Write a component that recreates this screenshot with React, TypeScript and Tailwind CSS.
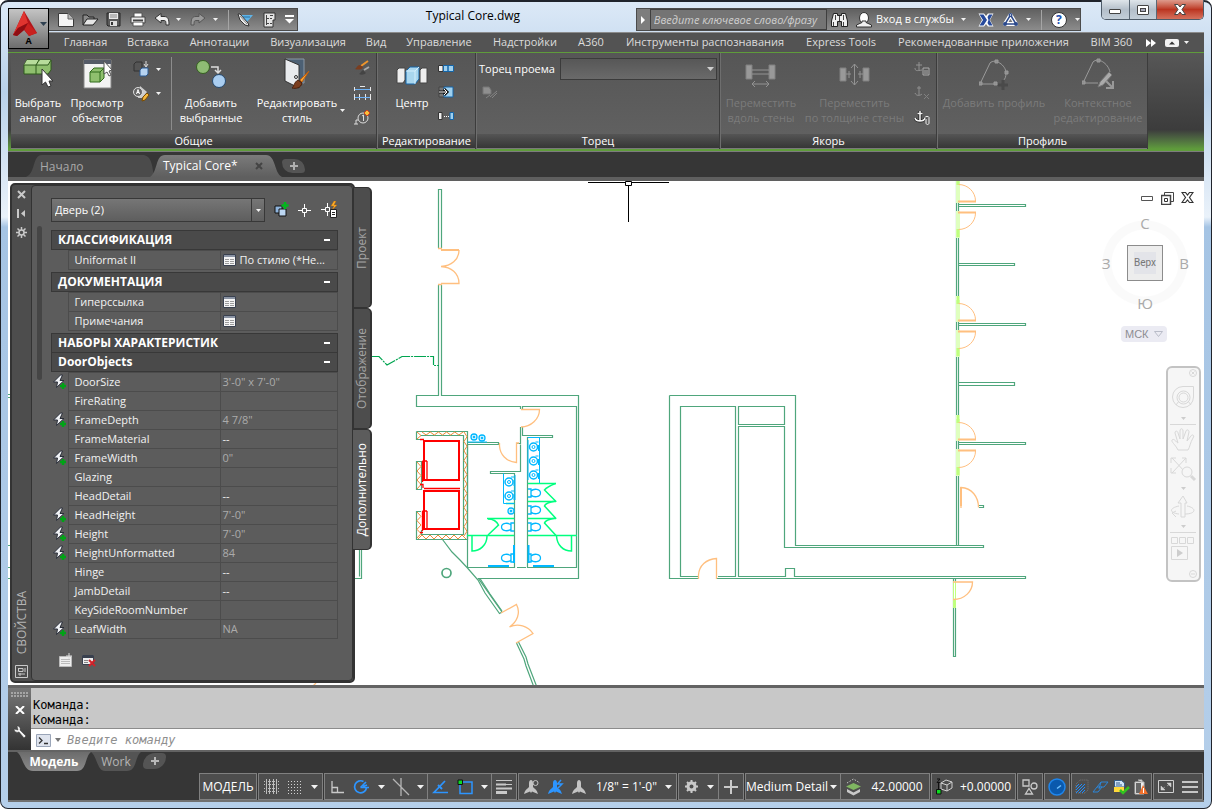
import React from 'react';

type Kids = { children?: React.ReactNode };

function Icon({ w, h, children, cls = '' }: { w: number; h: number; cls?: string } & Kids) {
  return (
    <svg width={w} height={h} viewBox={`0 0 ${w} ${h}`} fill="none" className={`shrink-0 ${cls}`} aria-hidden="true">
      {children}
    </svg>
  );
}

function Caret({ color = '#f2f2f2' }: { color?: string }) {
  return (
    <Icon w={7} h={4}>
      <path d="M0 0H7L3.5 4Z" fill={color} />
    </Icon>
  );
}

function SmallCaret() {
  return (
    <Icon w={5} h={3}>
      <path d="M0 0H5L2.5 3Z" fill="#f2f2f2" />
    </Icon>
  );
}

/* ---------------------------------------------------------------- title */

function QuickAccess() {
  return (
    <div className="flex h-[23px] w-[249px] items-center border border-l-0 border-[#4b4b4b] bg-linear-to-b from-[#606060] to-[#8c8c8c] pl-[9px]">
      <button aria-label="Создать" className="w-6">
        <Icon w={16} h={14}>
          <path d="M0.5 0.5H10L15.5 6V13.500H0.500Z" fill="#f4f4f4" stroke="#3a3a3a" />
          <path d="M10 0.500V6H15.500" fill="#bbb" stroke="#666" />
        </Icon>
      </button>
      <button aria-label="Открыть" className="w-6">
        <Icon w={17} h={14}>
          <path d="M1 12V2H5L7 4H12V6" fill="#8a8a8a" stroke="#222" />
          <path d="M1 12L5 6H16L11 12Z" fill="#e6e6e6" stroke="#222" />
        </Icon>
      </button>
      <button aria-label="Сохранить" className="w-6">
        <Icon w={15} h={15}>
          <path d="M1 1H14V14H2L1 13Z" fill="#5a5a5a" stroke="#262626" />
          <path d="M3 1H12V7H3Z" fill="#e8e8e8" />
          <path d="M4 3H11M4 5H11" stroke="#888" />
          <path d="M4 9H11V14H4Z" fill="#ddd" />
          <path d="M5 10H7V13H5Z" fill="#333" />
        </Icon>
      </button>
      <button aria-label="Печать" className="w-6">
        <Icon w={16} h={15}>
          <path d="M4 1H12V6H4Z" fill="#fff" stroke="#555" />
          <path d="M1 5H15V11H1Z" fill="#e8e8e8" stroke="#444" />
          <path d="M3 7.500H13V9H3Z" fill="#444" />
          <path d="M3 10H13V14H3Z" fill="#fff" stroke="#555" />
        </Icon>
      </button>
      <button aria-label="Отменить" className="w-[22px]">
        <Icon w={16} h={13}>
          <path d="M1 5L7 0.500V3.500H10C14 3.500 15 6 15 12H12C12 8 11.500 7.500 10 7.500H7V10Z" fill="#f0f0f0" stroke="#333" />
        </Icon>
      </button>
      <button aria-label="Список отмены" className="w-[14px]"><SmallCaret /></button>
      <button aria-label="Повторить" className="w-[23px]">
        <Icon w={16} h={13}>
          <path d="M15 5L9 0.500V3.500H6C2 3.500 1 6 1 12H4C4 8 4.500 7.500 6 7.500H9V10Z" fill="#9a9a9a" stroke="#565656" />
        </Icon>
      </button>
      <button aria-label="Список повтора" className="w-[15px]"><SmallCaret /></button>
      <span className="h-5 w-px bg-[#a5a5a5]" />
      <button aria-label="Рабочее пространство" className="ml-2 w-[26px]">
        <Icon w={17} h={14}>
          <path d="M4 2H16L10 9Z" fill="#5fb4e8" />
          <path d="M6 4H13" stroke="#2a6f9e" />
          <path d="M1 1L3 1L11 10L12 13L8 12L3 7Z" fill="#ececec" stroke="#333" />
          <path d="M3 3L10 11" stroke="#888" />
        </Icon>
      </button>
      <button aria-label="Диспетчер проектов" className="w-[22px]">
        <Icon w={14} h={16}>
          <path d="M1 1H12V8H10V15H1Z" fill="#e4e4e4" stroke="#333" />
          <path d="M3.500 3V13M3 6.500H6M3 11.500H6M7 6.500H9M7 11.500H9M7 3.500H10" stroke="#444" />
        </Icon>
      </button>
      <button aria-label="Настройка панели">
        <Icon w={9} h={9}>
          <path d="M0 1H9" stroke="#fff" strokeWidth="2" />
          <path d="M0 4H9L4.500 8.500Z" fill="#fff" />
        </Icon>
      </button>
    </div>
  );
}

function InfoCenter() {
  return (
    <div className="flex h-[23px] w-[445px] items-center border border-[#4b4b4b] bg-linear-to-b from-[#606060] to-[#8c8c8c] text-white">
      <button aria-label="Свернуть поиск" className="flex h-full w-[13px] items-center justify-center bg-[#7d7d7d]">
        <Icon w={4} h={8}><path d="M0 0L4 4L0 8Z" fill="#fff" /></Icon>
      </button>
      <input
        aria-label="Поиск"
        placeholder="Введите ключевое слово/фразу"
        className="h-[21px] w-[180px] border border-[#3f3f3f] bg-[#747474] pl-[3px] text-[11px] italic placeholder:text-[#cfcfcf]"
      />
      <button aria-label="Найти" className="ml-1 w-[25px]">
        <Icon w={17} h={16}>
          <path d="M2.500 1.500H6.500V3.500H10.500V1.500H14.500L16.500 9V14.500H10.500V9.500H6.500V14.500H0.500V9Z" fill="#f0f0f0" stroke="#222" />
          <path d="M2.500 10V14M12.500 10V14M4.500 3V8M12.500 3V8M8.500 4V9" stroke="#444" />
        </Icon>
      </button>
      <button className="flex items-center text-[11px]">
        <Icon w={16} h={16} cls="mr-1">
          <ellipse cx="8" cy="6" rx="4.500" ry="5.500" fill="#fff" stroke="#333" />
          <path d="M0.500 15V13L6 10.500V9H10V10.500L15.500 13V15Z" fill="#f2f2f2" stroke="#333" />
        </Icon>
        <span className="mr-1 w-[81px] text-left whitespace-nowrap">Вход в службы</span>
        <SmallCaret />
      </button>
      <button aria-label="Exchange" className="ml-3">
        <Icon w={16} h={14}>
          <path d="M0.500 0.500H6L8 3L10 0.500H15.500L12 7L15.500 13.500H10L8 11L6 13.500H0.500L4 7Z" fill="#fff" />
          <path d="M1.500 1.500H5.500L9 7L5.500 12.500H1.500L5 7ZM14.500 1.500H11L9.500 4L10.500 7L9.500 10L11 12.500H14.500L11.500 7Z" fill="#274a9c" />
        </Icon>
      </button>
      <button aria-label="A360" className="ml-2 flex items-center gap-[7px]">
        <Icon w={17} h={15}>
          <path d="M8.500 3L14 12H3Z" stroke="#fff" strokeWidth="4" strokeLinejoin="round" />
          <path d="M8.500 3L14 12H3Z" stroke="#2c4a8c" strokeWidth="1.500" />
          <circle cx="8.500" cy="3" r="2" fill="#2c4a8c" />
          <circle cx="3" cy="12" r="2" fill="#2c4a8c" />
          <circle cx="14" cy="12" r="2" fill="#2c4a8c" />
          <circle cx="8.500" cy="3" r="0.700" fill="#fff" />
        </Icon>
        <SmallCaret />
      </button>
      <span className="ml-[10px] h-5 w-px bg-[#a5a5a5]" />
      <button aria-label="Справка" className="ml-[9px] flex items-center gap-2">
        <span className="flex size-4 items-center justify-center rounded-full border border-[#333] bg-white text-[12px] leading-none font-bold text-[#1c4fb0]">?</span>
        <SmallCaret />
      </button>
    </div>
  );
}

function WindowButtons() {
  return (
    <div className="flex h-5 overflow-hidden rounded-b-[5px] border border-t-0 border-[#4e5b68]">
      <button aria-label="Свернуть окно" className="flex w-7 items-center justify-center border-r border-[#5b6875] bg-linear-to-b from-[#dfe5ea] via-[#b4bfca] to-[#c3ced8]">
        <span className="mt-1 h-[5px] w-3 rounded-[1px] border border-[#444] bg-white" />
      </button>
      <button aria-label="Развернуть окно" className="flex w-[27px] items-center justify-center border-r border-[#5b6875] bg-linear-to-b from-[#dfe5ea] via-[#b4bfca] to-[#c3ced8]">
        <span className="h-[10px] w-3 rounded-[1px] border border-[#444] bg-white p-[2px]"><span className="block h-1 border border-[#444] bg-[#aab]" /></span>
      </button>
      <button aria-label="Закрыть окно" className="flex w-[46px] items-center justify-center bg-linear-to-b from-[#dd9a8c] via-[#bb3420] to-[#d5705c]">
        <Icon w={12} h={11}>
          <path d="M0.500 0.500H4L6 3L8 0.500H11.500L8 5.500L11.500 10.500H8L6 8L4 10.500H0.500L4 5.500Z" fill="#fff" stroke="#444" />
        </Icon>
      </button>
    </div>
  );
}

const ribbonTabs = [
  'Главная', 'Вставка', 'Аннотации', 'Визуализация', 'Вид', 'Управление', 'Надстройки', 'A360',
  'Инструменты распознавания', 'Express Tools', 'Рекомендованные приложения', 'BIM 360',
];

function Header() {
  return (
    <header className="grid grid-cols-[41px_minmax(0,1fr)] grid-rows-[32px_20px]">
      <div className="col-start-2 row-start-1 flex items-start justify-between">
        <div className="mt-2"><QuickAccess /></div>
        <h1 className="mt-2 pl-3 text-[12px] leading-4 text-black">Typical Core.dwg</h1>
        <div className="flex items-start gap-5">
          <div className="mt-2"><InfoCenter /></div>
          <WindowButtons />
        </div>
      </div>
      <nav className="col-span-2 col-start-1 row-start-2 flex items-center border-t border-[#8b8b8b] bg-[#535353] pl-[46px] text-[11px] text-[#dcdcdc]">
        <div className="grid grid-cols-[63px_62px_81px_96px_40px_86px_86px_46px_182px_90px_195px_61px] whitespace-nowrap">
          {ribbonTabs.map((t) => (
            <button key={t} className="flex justify-center">{t}</button>
          ))}
        </div>
        <button aria-label="Ещё вкладки" className="ml-1">
          <Icon w={10} h={8}><path d="M0 0L5 4L0 8ZM5 0L10 4L5 8Z" fill="#fff" /></Icon>
        </button>
        <button aria-label="Свернуть ленту" className="ml-[9px] flex items-center gap-[5px]">
          <Icon w={14} h={8}>
            <rect width="14" height="8" rx="2" fill="#f2f2f2" />
            <path d="M4 5.500L7 2.500L10 5.500Z" fill="#333" />
          </Icon>
          <SmallCaret />
        </button>
      </nav>
      <button
        aria-label="Меню приложения"
        className="z-10 col-start-1 row-span-2 row-start-1 mt-2 flex h-[41px] flex-col items-center border border-black bg-linear-to-b from-[#c4c4c4] via-[#9a9a9a] to-[#6d6d6d]"
      >
        <span className="flex w-full items-center gap-[3px] pt-[2px] pl-1">
          <Icon w={24} h={25}>
            <path d="M11 0L24 22L16 25L11 19L4 25L0 24Z" fill="#b3161b" />
            <path d="M11 0L15 12L5 17L0 24Z" fill="#e0342f" />
            <path d="M15 12L24 22L16 25L9 15Z" fill="#c9211f" />
            <path d="M5 17L15 12L11 19L4 25L0 24Z" fill="#8f0e13" />
          </Icon>
          <Caret color="#2f4050" />
        </span>
        <span className="text-[9px] leading-[9px] font-bold text-black">A</span>
      </button>
    </header>
  );
}

/* --------------------------------------------------------------- ribbon */

function Panel({ title, cls, children }: { title: string; cls: string } & Kids) {
  return (
    <section className={`flex shrink-0 flex-col border-r border-[#3c3c3c] bg-linear-to-b from-[#565656] to-[#626262] ${cls}`}>
      <div className="flex flex-1 items-start">{children}</div>
      <h2 className="flex h-[15px] items-center justify-center border-b border-[#7a7a7a] bg-linear-to-b from-[#555] to-[#363636] text-[11px] leading-[14px] text-white">
        {title}
      </h2>
    </section>
  );
}

function BigButton({ lines, cls, icon, off = false }: { lines: string[]; cls: string; icon: React.ReactNode; off?: boolean }) {
  return (
    <button disabled={off} className={`flex shrink-0 flex-col items-center text-[11px] leading-[15px] whitespace-nowrap ${off ? 'text-[#7b7b7b]' : 'text-white'} ${cls}`}>
      <span className="flex h-[42px] items-center">{icon}</span>
      {lines.map((l) => <span key={l}>{l}</span>)}
    </button>
  );
}

const anchorPath = 'M6 2V12M3.500 4.500H8.500M1 9C2 13 10 13 11 9';

function Ribbon() {
  return (
    <div className="flex h-[99px] overflow-hidden border-t border-b-2 border-[#5f9c3b] bg-linear-to-b from-[#575757] via-[#3c3c3c] via-80% to-[#5f9c3b] pl-[3px]">
      <Panel title="Общие" cls="w-[366px]">
        <BigButton cls="w-[54px]" lines={['Выбрать', 'аналог']} icon={
          <Icon w={30} h={30}>
            <path d="M1 6L4 1H15L17 1H28V11L25 15H1Z" fill="#8fbf6e" stroke="#2f5a1d" />
            <path d="M1 6H13L16 1H4ZM14 6H25L28 1H17Z" fill="#b7dc9b" />
            <path d="M1 6H25L28 1M13 15V6L16 1" stroke="#2f5a1d" />
            <path d="M19 10V26L22.500 23L25 28L28 27L26 22H30Z" fill="#fff" stroke="#333" />
          </Icon>
        } />
        <BigButton cls="w-16" lines={['Просмотр', 'объектов']} icon={
          <Icon w={29} h={30}>
            <path d="M1 1H28V29H1Z" fill="#f3f3f3" stroke="#888" />
            <path d="M1 1H28V5H1Z" fill="#555b68" />
            <path d="M7 13L11 9H21V19L17 23H7Z" fill="#8fbf6e" stroke="#2f6b1a" />
            <path d="M7 13H17L21 9M17 13V23" stroke="#2f6b1a" />
            <path d="M21 2V15L24 13L26 17L28 16L26 12L29 11Z" fill="#fff" stroke="#555" />
          </Icon>
        } />
        <div className="flex w-[42px] flex-col gap-2 pt-[8px] pl-1">
          <button aria-label="Изолировать объекты" className="flex items-center gap-[6px]">
            <Icon w={17} h={16}>
              <path d="M1 3L3 1H9V7L7 10H1Z" fill="#555" stroke="#333" />
              <path d="M13 0V5M11 3L13 6L15 3" stroke="#ddd" />
              <path d="M7 9L9 7H15V13L13 15H7Z" fill="#b6d3f0" stroke="#2b5b94" />
            </Icon>
            <SmallCaret />
          </button>
          <button aria-label="Свойства текста" className="flex items-center gap-[6px]">
            <Icon w={17} h={17}>
              <path d="M7 1L14 7L9 13L5 13Z" fill="#cfcfcf" />
              <circle cx="5" cy="7" r="4.500" stroke="#ddd" fill="#666" />
              <path d="M3.500 9L5 4.500L6.500 9M4 7.500H6" stroke="#fff" />
              <path d="M9 16L10 12L14 8L16 10L12 15Z" fill="#f5b73c" stroke="#7a4c00" />
            </Icon>
            <SmallCaret />
          </button>
        </div>
        <span className="mt-1 h-[73px] w-px bg-[#8c8c8c]" />
        <BigButton cls="w-[78px]" lines={['Добавить', 'выбранные']} icon={
          <Icon w={32} h={30}>
            <circle cx="8" cy="8" r="6.500" fill="#8fbd74" stroke="#35601f" />
            <circle cx="24" cy="22" r="6.500" fill="#a9cdf0" stroke="#24486e" />
            <path d="M16 8H23V13M20 11L23 14L26 11" stroke="#ddd" strokeWidth="1.500" />
          </Icon>
        } />
        <div className="flex w-[98px] items-end">
          <BigButton cls="w-[94px]" lines={['Редактировать', 'стиль']} icon={
            <Icon w={30} h={32}>
              <path d="M4 1H22V25H20" fill="#4c6074" stroke="#8b98a5" />
              <path d="M3 1L17 7V30L3 23Z" fill="#e9ebee" stroke="#333" />
              <circle cx="14" cy="19" r="1.500" stroke="#333" />
              <path d="M27 13L18 22L20 24Z" fill="#f4a53a" stroke="#c4600a" />
              <path d="M10 30C12 29 12 24 16 22L20 25C19 30 14 31 10 30Z" fill="#7b3d1e" stroke="#4a1f0b" />
            </Icon>
          } />
          <span className="-ml-1 pb-[13px]"><SmallCaret /></span>
        </div>
        <div className="flex flex-1 flex-col items-center gap-[9px] pt-[7px]">
          <button aria-label="Копировать свойства">
            <Icon w={17} h={16}>
              <path d="M14 1L7 6" stroke="#f0952b" strokeWidth="2" />
              <path d="M1 9C3 8 3 5 6 5L9 7C8 10 4 10 1 9Z" fill="#7b3d1e" />
              <path d="M5 14C7 13 7 11 9 10L12 13C10 15 7 15 5 14Z" fill="#444" />
              <path d="M10 10L15 7" stroke="#aaa" strokeWidth="2" />
            </Icon>
          </button>
          <button aria-label="Размеры">
            <Icon w={17} h={16}>
              <path d="M0.500 2V6M16.500 2V6M0.500 9V15M5.500 9V15M11.500 9V15M16.500 9V15M6 1.500H11" stroke="#e8e8e8" />
              <path d="M1 4.500H16M1 12.500H16" stroke="#6db1f5" />
            </Icon>
          </button>
          <button aria-label="Выноска">
            <Icon w={17} h={16}>
              <circle cx="9" cy="8" r="5" stroke="#ddd" />
              <path d="M8 6L9.500 5V11M4 10H2V14M0 14H4" stroke="#ddd" />
              <path d="M10 3L13 0L16 3L13 6Z" fill="#f7c23c" stroke="#d63f1b" />
            </Icon>
          </button>
        </div>
      </Panel>

      <Panel title="Редактирование" cls="w-[99px] border-l border-l-[#6e6e6e]">
        <BigButton cls="ml-3 w-11" lines={['Центр']} icon={
          <Icon w={32} h={20} cls="mt-1">
            <path d="M1 4L3 2H9V14L7 17H1Z" fill="#eee" stroke="#444" />
            <path d="M10 5L14 1H23V13L19 18H10Z" fill="#a9d6ee" stroke="#1465a8" />
            <path d="M10 5H19L23 1M19 5V18" stroke="#d4eefc" />
            <path d="M24 4L26 2H31V17H24Z" fill="#eee" stroke="#444" />
          </Icon>
        } />
        <div className="flex w-6 flex-col items-center gap-[14px] pt-3">
          <button aria-label="Массив">
            <Icon w={16} h={7}>
              <path d="M0.500 0.500H5V6.500H0.500Z" fill="#eee" stroke="#333" />
              <path d="M5.500 0.500H10V6.500H5.500ZM10 0.500H15.500V6.500H10Z" fill="#9fd0ee" stroke="#1465a8" />
            </Icon>
          </button>
          <button aria-label="Переместить">
            <Icon w={16} h={12}>
              <path d="M1 1H8V11H1Z" fill="#777" stroke="#444" />
              <path d="M6 1H15V11H6Z" fill="#9fd0ee" stroke="#1465a8" />
              <path d="M1 6H9M6 3L9 6L6 9" stroke="#111" strokeWidth="3" />
              <path d="M1 6H9M6 3L9 6L6 9" stroke="#fff" />
            </Icon>
          </button>
          <button aria-label="Интервал">
            <Icon w={16} h={8}>
              <path d="M0.500 0.500H4V7.500H0.500Z" fill="#eee" stroke="#333" />
              <path d="M12 0.500H15.500V7.500H12Z" fill="#9fd0ee" stroke="#1465a8" />
              <path d="M6 4.500H11" stroke="#fff" strokeDasharray="1 1" />
            </Icon>
          </button>
        </div>
      </Panel>

      <Panel title="Торец" cls="w-[244px] border-l border-l-[#6e6e6e]">
        <div className="flex flex-col gap-[6px] pt-[5px] pl-[2px]">
          <div className="flex items-center">
            <label htmlFor="endcap" className="w-[81px] text-[11px] whitespace-nowrap text-white">Торец проема</label>
            <div className="relative">
              <select id="endcap" className="block h-[22px] w-[157px] appearance-none border border-[#3b3b3b] bg-linear-to-b from-[#575757] to-[#6a6a6a]" />
              <span className="pointer-events-none absolute top-[9px] right-[3px] flex"><Caret color="#cfcfcf" /></span>
            </div>
          </div>
          <button aria-label="Стиль торца" disabled className="ml-[3px] w-4">
            <Icon w={16} h={14}>
              <path d="M1 1H7L9 4V8H1Z" fill="#8f8f8f" stroke="#777" />
              <path d="M8 11L15 5M10 12L15 7M4 12L8 9" stroke="#858585" />
            </Icon>
          </button>
        </div>
      </Panel>

      <Panel title="Якорь" cls="w-[217px] border-l border-l-[#6e6e6e]">
        <BigButton off cls="w-20" lines={['Переместить', 'вдоль стены']} icon={
          <Icon w={32} h={26} cls="mt-1">
            <path d="M1 2H7V16H1ZM24 2H30V16H24Z" fill="#999" stroke="#808080" />
            <path d="M7 7H24M7 11H24" stroke="#939393" />
            <path d="M7 21H24M10 18L7 21L10 24M21 18L24 21L21 24" stroke="#939393" />
          </Icon>
        } />
        <BigButton off cls="w-[107px]" lines={['Переместить', 'по толщине стены']} icon={
          <Icon w={32} h={26} cls="mt-1">
            <path d="M1 5H7V18H1ZM24 5H30V18H24Z" fill="#999" stroke="#808080" />
            <path d="M7 11H12M19 11H24M10 8V15M21 8V15M15.500 1V22M12 5L15.500 1L19 5M12 18L15.500 22L19 18" stroke="#939393" />
          </Icon>
        } />
        <div className="flex flex-1 flex-col items-center gap-[9px] pt-2">
          <button aria-label="Якорь" disabled>
            <Icon w={16} h={15}>
              <path d="M5 1V9M2 4H8M1 7C1 10 3 10 8 9" stroke="#939393" />
              <path d="M9 7H15V14H9ZM10 10H14M10 12H14" stroke="#aaa" />
            </Icon>
          </button>
          <button aria-label="Освободить якорь" disabled>
            <Icon w={16} h={15}>
              <path d="M5 1V10M3 3H7M1 8C2 11 6 11 8 9" stroke="#909090" />
              <path d="M10 9L15 14M15 9L10 14" stroke="#808080" />
            </Icon>
          </button>
          <button aria-label="Свойства якоря">
            <Icon w={17} h={16}>
              <path d={anchorPath} stroke="#1e1e1e" strokeWidth="3" />
              <path d={anchorPath} stroke="#f4f4f4" strokeWidth="1.500" />
              <path d="M11 8.500C11 7 15 7 15 8.500V14C15 16 12 16 12 14V10" stroke="#eee" />
            </Icon>
          </button>
        </div>
      </Panel>

      <Panel title="Профиль" cls="w-[211px] border-l border-l-[#6e6e6e]">
        <BigButton off cls="w-[112px]" lines={['Добавить профиль']} icon={
          <Icon w={30} h={32}>
            <path d="M1 26L11 5C16 0 27 7 27 15C27 19 26 21 24 23M1 26H17" stroke="#9a9a9a" />
            <path d="M16 2H19V5H16ZM26 13H29V16H26ZM0 24H3V27H0ZM15 24H18V27H15Z" fill="#8f8f8f" stroke="#9a9a9a" />
            <path d="M24 22V32M19 27H29" stroke="#4a4a4a" strokeWidth="3" />
          </Icon>
        } />
        <BigButton off cls="w-24" lines={['Контекстное', 'редактирование']} icon={
          <Icon w={32} h={32}>
            <path d="M1 25L11 4C16 -1 26 5 28 14M1 25H16" stroke="#9a9a9a" />
            <path d="M15 1H18V4H15ZM0 23H3V26H0Z" fill="#8f8f8f" stroke="#9a9a9a" />
            <path d="M16 29L18 24L27 14L30 17L21 27Z" fill="#aaa" stroke="#777" />
            <path d="M24 23L30 29M31 23V30H24" stroke="#999" strokeWidth="2" />
          </Icon>
        } />
      </Panel>
    </div>
  );
}

/* ------------------------------------------------------------ file tabs */

function FileTabs() {
  return (
    <div className="flex h-[30px] items-end border-t border-b-[4px] border-t-[#7d7d7d] border-b-[#5f5f5f] bg-[#363636] pl-[18px] text-[12px]">
      <button className="h-[22px] w-[128px] bg-[#4b4b4b] pt-[2px] pl-[14px] text-left text-[#a9a9a9] [clip-path:path('M0_22C10_18_6_0_16_0H116C124_0_126_6_128_22Z')]">
        Начало
      </button>
      <div className="-ml-1 flex h-[22px] w-[132px] items-center justify-between bg-linear-to-b from-[#7b7b7b] to-[#5f5f5f] pr-[19px] pl-[13px] text-white [clip-path:path('M0_22C8_17_5_0_15_0H116C126_0_124_18_132_22Z')]">
        <button>Typical Core*</button>
        <button aria-label="Закрыть чертёж">
          <Icon w={8} h={8}><path d="M1 1L7 7M7 1L1 7" stroke="#444" strokeWidth="2" /></Icon>
        </button>
      </div>
      <button aria-label="Новый чертёж" className="mb-1 flex h-[14px] w-[23px] items-center justify-center rounded-tl-sm rounded-tr-xl rounded-br-sm rounded-bl-xl bg-[#555]">
        <Icon w={8} h={8}><path d="M4 0V8M0 4H8" stroke="#b0b0b0" strokeWidth="2" /></Icon>
      </button>
    </div>
  );
}

/* -------------------------------------------------------------- drawing */

const G = '#4fa67c';
const O = '#ffbf7f';
const B = '#00b8ff';
const N = '#00ff7f';
const L = '#bfff7f';

function DoorPair({ y }: { y: number }) {
  return (
    <g transform={`translate(0 ${y})`}>
      <path d="M957 -23V-1M959 -23V-1M957 7V34M959 7V34" stroke={L} />
      <path d="M958 -27V-19M958 25V33" stroke={L} strokeWidth="3" />
      <path d="M958.500 -19.500C968 -19.500 975.500 -12 975.500 -3" stroke={O} />
      <path d="M958 -2.500H976M958 8.500H976" stroke={O} strokeWidth="2" />
      <path d="M975.500 9C975.500 18 968 25.500 958.500 25.500" stroke={O} />
    </g>
  );
}

function Sink({ x, y }: { x: number; y: number }) {
  return (
    <g stroke={B}>
      <circle cx={x} cy={y} r="4" strokeWidth="1.500" />
      <circle cx={x} cy={y} r="1.500" />
      <path d={`M${x + 2} ${y - 5}H${x + 5}M${x + 5} ${y - 2}V${y + 4}`} />
    </g>
  );
}

function SmallSink({ x, y }: { x: number; y: number }) {
  return (
    <g stroke={B}>
      <circle cx={x} cy={y} r="3" strokeWidth="1.300" />
      <circle cx={x} cy={y} r="1" fill={B} />
    </g>
  );
}

function Toilet({ x, y, flip = false }: { x: number; y: number; flip?: boolean }) {
  return (
    <path
      transform={`translate(${x} ${y}) scale(${flip ? -1 : 1} 1)`}
      d="M0 -4H3V4H0M3 -2C6 -5 12.500 -4 12.500 0C12.500 4 6 5 3 2"
      stroke={B}
      strokeWidth="1.300"
    />
  );
}

const hatch = (x1: number, y1: number, x2: number, y2: number, n: number) => {
  const horizontal = x2 - x1 > y2 - y1;
  return Array.from({ length: n }, (_, i) => {
    const s = (horizontal ? x2 - x1 : y2 - y1) / n;
    const a = (horizontal ? x1 : y1) + i * s;
    return horizontal
      ? `M${a} ${y1}L${a + s / 2} ${y2}L${a + s} ${y1}`
      : `M${x1} ${a}L${x2} ${a + s / 2}L${x1} ${a + s}`;
  }).join('');
};

function FloorPlan() {
  return (
    <svg className="absolute inset-0 h-full w-full" viewBox="8 181 1196 504" preserveAspectRatio="xMinYMin slice" fill="none" aria-label="План этажа">
      <g stroke={G} strokeWidth="1.200">
        <path d="M438.500 248V189.500H441.500V248M438.500 285V395.500H416.500V406.500H520.500V409M441.500 285V395.500H578.500V578.500H478.500L502 612M522.500 409V406.500H576.500V567.500H527.500V437.500H552.500V435.500H522.500V427M520.500 427V443.500H516M517 567.500H526" />
        <path d="M467.500 442.500H498.500V444.500H467.500V567.500H514.500V473.500H490.500V471.500H520.500V444.500" />
        <path d="M416.500 431.500H467.500V539.500H416.500V511.500H421M421 439.500H416.500V431.500M421 435.500H463.500V534.500H421.500V530M416.500 461.500H421.500V489.500H416.500Z" />
        <path d="M442.500 539.500L452 552L460 560L467.500 568L478 580L485 593L499.500 613.500L502 612M480 578.500L490 594L502 611" />
        <path d="M516.500 643L524 659L526 666L533.500 686M518.500 642L526 657L528 664L536.500 686" />
        <path d="M669.500 395.500H795.500V545.500H983.500V547.500H784.500V426.500H738.500V576.500H785.500V568.500H794.500V576.500H1025.500V578.500H717M669.500 395.500V578.500H699M699 576.500H680.500V406.500H735.500V576.500H718M738.500 406.500H784.500V424.500H738.500Z" />
        <path d="M956.500 181V545.500M958.500 181V545.500M953.500 579V656.500H955.500V579" />
        <path d="M958.500 204.500H1025.500V206.500H958.500M958.500 263.500H1014.500V265.500H958.500M958.500 323.500H1025.500V325.500H958.500M958.500 382.500H1014.500V385.500H958.500M958.500 442.500H1025.500V444.500H958.500M979 505.500H983.500V507.500H979" />
        <path d="M359.500 548V576.500M361.500 548V578.500H354M8 394.500H11M8 397.500H11M8 545.500H11M8 567.500H11M8 578.500H11" />
      </g>
      <circle cx="446.500" cy="573" r="4.500" stroke={G} strokeWidth="1.700" />
      <path d="M372 356.500H379L387 365L402 356.500H433.500V365.500H439" stroke="#00a550" strokeDasharray="12 1 2 1" strokeWidth="1.200" />

      <path
        d="M956 296H961V322H956ZM956 330H961V357H956ZM956 415H961V441H956ZM956 449H961V476H956ZM956 181H961V203H956ZM956 211H961V238H956ZM953 581H957V608H953Z"
        fill="#fff"
      />
      <DoorPair y={204} />
      <DoorPair y={323} />
      <DoorPair y={442} />
      <path d="M953.500 581V608M955.500 581V608" stroke={L} />
      <path d="M954.500 600V608" stroke={L} strokeWidth="3" />

      <g stroke={O} strokeWidth="1.300">
        <path d="M438 248.500H442M438 284.500H442M441 266.500C451 266 459 260 459 250M441 266.500C451 267 459 273 459 283.500H441" />
        <path d="M441 250H459" strokeWidth="2" />
        <path d="M521 409.500H539.500C539.500 419 531 427 521 427" />
        <path d="M499.500 443V446C500 454 506 462 516.500 462.500V443H519" />
        <path d="M501 613L516.500 604.500C521 613 517 622 509.500 627C518 623 528 626 533 633.500L516 643" />
        <path d="M698.500 579V575C699 566 706 559 716.500 558.500V579" />
        <path d="M953 582H972.500C972.500 591 965 599.500 953 599.500" />
        <path d="M961 508V487.500C972 488 978.500 497 978.500 507.500" />
        <path d="M961 487V506" strokeWidth="2" />
        <path d="M313 686L316 683" />
      </g>

      <path
        d={hatch(422, 432, 463, 435, 5) + hatch(464, 432, 467, 536, 11) + hatch(417, 462, 421, 489, 3) + hatch(417, 512, 421, 538, 3) + hatch(418, 539, 466, 535, 6) + hatch(417, 432, 421, 439, 1)}
        stroke="#f08a35"
      />
      <g stroke="#ff0000">
        <path d="M424 441H459V480H424ZM424 491H459V529H424Z" strokeWidth="2" />
        <path d="M427 461V480M427 511V530M422.500 461H427M422.500 461V482M422.500 511H427M422.500 511V531M424 488.500H460M420 439.500H424M420 484.500H423V488M420 532.500H423" strokeWidth="1.300" />
      </g>

      <g stroke={N} strokeWidth="1.500">
        <path d="M528 483.500H556M528 501.500H556M528 518.500H556M487 518.500H514M506 503.500H514M467 535.500H514M528 535.500H577" />
        <path d="M555.500 483.500C549 486 546 488 544.500 490L555.500 501C550 502 545 504 544.500 506L555.500 518C550 519 545 521 544.500 523L556 535.500" />
        <path d="M488 519C494 519 497 522 498.500 525L488 535M472 536V551C480 551 487 545 487 536M571.500 536V551C563 551 557 545 556.500 536" />
      </g>

      <g stroke={B}>
        <path d="M528 437.500H539.500V483M503.500 473.500V503.500H514.500M468 442H487" />
        <path d="M528 440V480M515 475V500" />
        <path d="M514 545V563M528.500 545V563M488 566H509M533 566H554" strokeWidth="2" />
      </g>
      <SmallSink x={474} y={437} />
      <SmallSink x={482} y={438} />
      <Sink x={533.5} y={447} />
      <Sink x={533.5} y={461} />
      <Sink x={533.5} y={475} />
      <Sink x={509} y={482} />
      <Sink x={509} y={496} />
      <SmallSink x={511} y={511} />
      <Toilet x={528} y={493} />
      <Toilet x={528} y={510} />
      <Toilet x={528} y={527} />
      <Toilet x={528} y={558} />
      <Toilet x={514} y={527} flip />
      <Toilet x={514} y={558} flip />

      <path d="M588 182.500H669M628.500 186V222" stroke="#000" />
      <path d="M625.500 181.500H631.500V185.500H625.500Z" fill="#fff" stroke="#000" />
    </svg>
  );
}

/* ------------------------------------------------------ view navigation */

function ViewControls() {
  return (
    <div className="absolute top-[9px] right-[3px] flex w-[100px] flex-col">
      <div className="flex justify-end gap-[7px] pr-[7px]">
        <button aria-label="Свернуть чертёж" className="pt-[3px]">
          <Icon w={14} h={13}><path d="M1.500 3.500H12.500V7.500H1.500Z" fill="#fff" stroke="#555" /></Icon>
        </button>
        <button aria-label="Восстановить чертёж">
          <Icon w={13} h={13}>
            <path d="M3.500 3V0.500H12.500V9.500H10" fill="#fff" stroke="#444" />
            <path d="M0.500 3.500H9.500V12.500H0.500Z" fill="#fff" stroke="#444" strokeWidth="1.500" />
            <path d="M3.500 6.500H6.500V9.500H3.500Z" stroke="#333" />
          </Icon>
        </button>
        <button aria-label="Закрыть вид">
          <Icon w={13} h={12}>
            <path d="M1 0.500H4.500L6.500 3L8.500 0.500H12L8.500 5.500L12 10.500H8.500L6.500 8L4.500 10.500H1L4.500 5.500Z" fill="#fff" stroke="#333" strokeWidth="1.200" />
          </Icon>
        </button>
      </div>
      <div className="mt-[7px] grid h-[100px] w-[88px] grid-cols-[10px_68px_10px] grid-rows-[20px_60px_20px] place-items-center self-start text-[15px] leading-5 text-[#aaa] [background:radial-gradient(circle_at_44px_50px,transparent_33px,#fafafa_34px,#fafafa_42px,transparent_43px)]">
        <button className="col-start-2">С</button>
        <button className="col-start-1 row-start-2">З</button>
        <button className="col-start-2 row-start-2 flex size-9 items-center justify-center border border-[#8c8c8c] bg-[#ededed] text-[#777]">
          <span className="flex size-[22px] items-center justify-center bg-[#e3e4e9] font-[Roboto] text-[10px]">Верх</span>
        </button>
        <button className="col-start-3 row-start-2">В</button>
        <button className="col-start-2 row-start-3">Ю</button>
      </div>
      <button className="mt-[13px] ml-5 flex h-4 w-[46px] items-center justify-between rounded-[4px] bg-[#ebebf3] px-1 font-['Liberation_Sans'] text-[11px] text-[#8d8d92]">
        МСК
        <Icon w={9} h={6}><path d="M0.500 0.500H8.500L4.500 5.500Z" stroke="#b9bcc8" /></Icon>
      </button>
      <div className="mt-6 flex h-[216px] w-[35px] flex-col items-center self-end rounded-[6px] border-2 border-[#c3c3c3] bg-[#f6f6f6]">
        <Icon w={31} h={212}>
          <g stroke="#d8d8d8">
            <circle cx="25" cy="5" r="3.500" />
            <path d="M23.500 3.500L26.500 6.500M26.500 3.500L23.500 6.500" />
            <path d="M15 18.500H25.500V29A10.500 10.500 0 1 1 15 18.500Z" />
            <circle cx="15.500" cy="29.500" r="6.500" />
            <circle cx="15.500" cy="29.500" r="4.500" />
            <path d="M8 37L11 33M23 37L20 33" />
            <path d="M2 56.500H28M2 164.500H28" />
            <path d="M10 82C7 76 3 74 4 72C6 70 8 74 10 75L7 65C7 62 10 63 10 65L12 71L12 63C12 60 15 60 15 63V71L18 63C19 61 21 62 21 64L19 73L23 68C24 66 27 67 25 70C22 75 22 79 20 82Z" />
            <path d="M4 90L18 105M4 105L18 90M3 95V90H8M14 90H18V95M3 100V105H8" />
            <circle cx="19" cy="104" r="5" fill="#f6f6f6" />
            <path d="M23 108L27 112" strokeWidth="3" />
            <path d="M13 149V135H10L15 128L19 135H17V149Z" />
            <path d="M11 138C1 140 1 145 11 146M19 138C29 140 28 146 17 146M8 143L4 145L8 149" />
            <path d="M3.500 169.500H9.500V175.500H3.500ZM11.500 169.500H17.500V175.500H11.500ZM19.500 169.500H25.500V175.500H19.500ZM3.500 178.500H19.500V191.500H3.500Z" />
            <circle cx="25" cy="206" r="3.500" />
            <path d="M23 206H27" />
          </g>
          <path d="M13 49H18L15.500 52ZM13 119H18L15.500 122ZM13 157H18L15.500 160ZM9 181L15 185L9 189Z" fill="#cdcdcd" />
        </Icon>
      </div>
    </div>
  );
}

/* -------------------------------------------------------------- palette */

type Row = { name: string; value?: string; auto?: boolean; sheet?: boolean; dim?: boolean };

const doorRows: Row[] = [
  { name: 'DoorSize', value: `3'-0" x 7'-0"`, auto: true, dim: true },
  { name: 'FireRating' },
  { name: 'FrameDepth', value: '4 7/8"', auto: true, dim: true },
  { name: 'FrameMaterial', value: '--' },
  { name: 'FrameWidth', value: '0"', auto: true, dim: true },
  { name: 'Glazing' },
  { name: 'HeadDetail', value: '--' },
  { name: 'HeadHeight', value: `7'-0"`, auto: true, dim: true },
  { name: 'Height', value: `7'-0"`, auto: true, dim: true },
  { name: 'HeightUnformatted', value: '84', auto: true, dim: true },
  { name: 'Hinge', value: '--' },
  { name: 'JambDetail', value: '--' },
  { name: 'KeySideRoomNumber' },
  { name: 'LeafWidth', value: 'NA', auto: true, dim: true },
];

function Bolt() {
  return (
    <Icon w={15} h={16} cls="ml-px">
      <path d="M8.500 1L1.500 8H5.500L4.500 13.500L12 6.500H8L10.500 1Z" fill="#f0f2f5" stroke="#2a2f3a" />
      <path d="M11 9V15M8 12H14" stroke="#00a316" strokeWidth="2.500" />
    </Icon>
  );
}

function Sheet() {
  return (
    <Icon w={13} h={12}>
      <path d="M0.500 0.500H12.500V11.500H0.500Z" fill="#f5f5f5" stroke="#39404e" />
      <path d="M1 2H12" stroke="#8a93a3" strokeWidth="2" />
      <path d="M2 5.500H6M7 5.500H11M2 7.500H6M7 7.500H11M2 9.500H6M7 9.500H11" stroke="#9b9b9b" />
    </Icon>
  );
}

function SectionHead({ children }: Kids) {
  return (
    <button className="flex h-[20px] w-full items-center justify-between border border-[#383838] bg-[#4a4a4a] pr-[7px] pl-[6px] text-[12px] leading-4 font-bold text-white">
      <span>{children}</span>
      <span className="h-[2px] w-[6px] bg-white" />
    </button>
  );
}

function Rows({ rows }: { rows: Row[] }) {
  return (
    <table className="w-full table-fixed border-collapse text-[11px] leading-4">
      <colgroup>
        <col className="w-[17px]" />
        <col className="w-[152px]" />
        <col />
      </colgroup>
      <tbody>
        {rows.map((r) => (
          <tr key={r.name} className="h-[19px]">
            <td className="p-0">{r.auto && <Bolt />}</td>
            <th scope="row" className="border border-[#4c4c4c] py-0 pr-0 pl-[6px] text-left font-normal text-[#f2f2f2]">{r.name}</th>
            <td className={`border border-[#4c4c4c] py-0 pr-0 pl-[2px] whitespace-nowrap ${r.dim ? 'text-[#ababab]' : 'text-[#f2f2f2]'}`}>
              <span className="flex h-4 items-center gap-1">
                {r.sheet && <Sheet />}
                {r.value}
              </span>
            </td>
          </tr>
        ))}
      </tbody>
    </table>
  );
}

function Palette() {
  return (
    <aside className="absolute top-[2px] left-[2px] flex items-start text-[#f2f2f2]">
      <div className="flex h-[500px] w-[345px] rounded-[5px] border-2 border-[#333] bg-[#4d4d4d]">
        <div className="flex w-[20px] flex-col items-center pt-[5px] pb-[3px]">
          <button aria-label="Закрыть палитру">
            <Icon w={9} h={9}><path d="M1 1L8 8M8 1L1 8" stroke="#c9c9c9" strokeWidth="2" /></Icon>
          </button>
          <button aria-label="Закрепить палитру" className="mt-[10px]">
            <Icon w={9} h={9}><path d="M1 0V9" stroke="#c9c9c9" strokeWidth="2" /><path d="M8 1V8L4 4.500Z" fill="#c9c9c9" /></Icon>
          </button>
          <button aria-label="Настройка палитры" className="mt-[9px]">
            <Icon w={11} h={11}>
              <path d="M5.500 0V11M0 5.500H11M1.500 1.500L9.500 9.500M9.500 1.500L1.500 9.500" stroke="#c9c9c9" strokeWidth="1.500" />
              <circle cx="5.500" cy="5.500" r="2.500" fill="#4d4d4d" stroke="#c9c9c9" strokeWidth="1.500" />
            </Icon>
          </button>
          <h2 className="mt-auto rotate-180 text-[12px] leading-4 text-[#b5b5b5] [writing-mode:vertical-rl]">СВОЙСТВА</h2>
          <Icon w={13} h={13} cls="mt-[11px]">
            <path d="M0.500 0.500H12.500V12.500H0.500ZM3.500 3V6.500H8V3.500H4M3 9H10M10 3V7M5 8V11" stroke="#c9c9c9" />
          </Icon>
        </div>
        <div className="flex flex-1 flex-col rounded-[4px] border border-[#333] bg-[#5c5c5c] pt-3 pr-[14px] pl-[5px]">
          <div className="flex items-center pl-[14px]">
            <div className="relative">
              <label htmlFor="kind" className="sr-only">Тип объекта</label>
              <select id="kind" className="block h-6 w-[214px] appearance-none border border-[#383838] bg-linear-to-b from-[#767676] to-[#5e5e5e] pl-[3px] text-[11px] leading-5 text-white">
                <option>Дверь (2)</option>
              </select>
              <span className="pointer-events-none absolute top-0 right-0 flex h-6 w-[14px] items-center justify-center border border-[#383838]"><SmallCaret /></span>
            </div>
            <button aria-label="Добавить к набору" className="ml-[9px]">
              <Icon w={15} h={16}>
                <path d="M1 4H8V11H1Z" fill="#8fb4dc" stroke="#111" />
                <path d="M5 7H12V14H5Z" fill="#bcd6f2" stroke="#111" />
                <path d="M11 0V7M7.500 3.500H14.500" stroke="#00b81c" strokeWidth="2.500" />
              </Icon>
            </button>
            <button aria-label="Выбрать объекты" className="ml-[9px]">
              <Icon w={13} h={13}><path d="M6.500 0V4M6.500 9V13M0 6.500H4M9 6.500H13M4.500 4.500H8.500V8.500H4.500Z" stroke="#fff" /></Icon>
            </button>
            <button aria-label="Быстрый выбор" className="ml-[10px]">
              <Icon w={17} h={18}>
                <path d="M6.500 2V6M6.500 11V15M0 8.500H4M4.500 6.500H8.500V10.500H4.500Z" stroke="#fff" />
                <path d="M13 0L10 5H13L11 9L16 4H13L15 0Z" fill="#ffb42e" stroke="#c46a00" strokeWidth="0.500" />
                <path d="M9.500 8.500H15.500V16.500H9.500Z" fill="#fff" stroke="#222" />
                <path d="M11 11.500H14M11 13.500H14" stroke="#222" />
              </Icon>
            </button>
          </div>
          <div className="mt-1 flex flex-1 gap-[9px]">
            <span className="h-[154px] w-[5px] rounded-full bg-[#454545]" />
            <div className="mt-1 flex-1">
              <SectionHead>КЛАССИФИКАЦИЯ</SectionHead>
              <Rows rows={[{ name: 'Uniformat II', value: 'По стилю (*Не...', sheet: true }]} />
              <div className="mt-[2px]">
                <SectionHead>ДОКУМЕНТАЦИЯ</SectionHead>
                <Rows rows={[{ name: 'Гиперссылка', sheet: true }, { name: 'Примечания', sheet: true }]} />
              </div>
              <div className="mt-[2px]">
                <SectionHead>НАБОРЫ ХАРАКТЕРИСТИК</SectionHead>
                <div className="-mt-px"><SectionHead>DoorObjects</SectionHead></div>
                <Rows rows={doorRows} />
              </div>
              <div className="mt-[14px] flex gap-[10px] pl-2">
                <button aria-label="Добавить набор характеристик">
                  <Icon w={13} h={14}>
                    <path d="M0.500 3.500H12.500V13.500H0.500Z" fill="#eee" stroke="#bbb" />
                    <path d="M2 6.500H11M2 8.500H11M2 10.500H11" stroke="#bbb" />
                    <path d="M10 0V6M7 3H13" stroke="#ddd" />
                  </Icon>
                </button>
                <button aria-label="Удалить набор характеристик">
                  <Icon w={14} h={14}>
                    <path d="M0.500 2.500H11.500V11.500H0.500Z" fill="#eee" stroke="#39404e" />
                    <path d="M1 4H11" stroke="#39404e" strokeWidth="2" />
                    <path d="M2 7.500H6M2 9.500H6" stroke="#888" />
                    <path d="M7 7L13 13M13 7L7 13" stroke="#d2232a" strokeWidth="2" />
                  </Icon>
                </button>
              </div>
            </div>
          </div>
        </div>
      </div>
      <div role="tablist" className="-ml-[2px] flex flex-col pt-[4px] text-[12px] leading-4">
        {['Проект', 'Отображение', 'Дополнительно'].map((t, i) => (
          <button
            key={t}
            role="tab"
            aria-selected={i === 2}
            className={`flex h-[121px] w-[19px] items-center justify-center rounded-r-[5px] border-y border-r-2 border-[#333] ${i === 2 ? 'bg-[#5c5c5c] text-white' : 'border-l bg-[#4d4d4d] text-[#a5a5a5]'}`}
          >
            <span className="rotate-180 [writing-mode:vertical-rl]">{t}</span>
          </button>
        ))}
      </div>
    </aside>
  );
}

/* --------------------------------------------------------- command line */

function CommandLine() {
  return (
    <section className="flex h-[67px] border-t-[3px] border-b-2 border-[#636363] font-['DejaVu_Sans_Mono',monospace] text-[12px]">
      <div className="flex w-[23px] flex-col items-center bg-linear-to-b from-[#777] via-[#555] to-[#333] pt-1">
        <Icon w={18} h={6}><path d="M0 1H18M0 4H18" stroke="#a5a5a5" strokeWidth="2" strokeDasharray="2 1" /></Icon>
        <button aria-label="Закрыть командную строку" className="mt-[8px]">
          <Icon w={10} h={8}><path d="M1 0L9 8M9 0L1 8" stroke="#fff" strokeWidth="2" /></Icon>
        </button>
        <button aria-label="Настройка командной строки" className="mt-[11px]">
          <Icon w={14} h={14}>
            <path d="M4 1L5 5L1 4C1 7 4 8 6 7L11 13L13 11L7 5C8 3 6 1 4 1Z" fill="#f5f5f5" stroke="#333" strokeWidth="0.500" />
          </Icon>
        </button>
      </div>
      <div className="flex flex-1 flex-col">
        <div className="h-[41px] bg-[#c8c8c8] pt-[10px] pl-[2px] leading-[15px] text-black">
          <p>Команда:</p>
          <p>Команда:</p>
        </div>
        <div className="flex flex-1 items-center border-t border-[#8c8c8c] bg-white pt-px pl-[5px]">
          <button aria-label="Последние команды" className="flex items-center gap-1">
            <Icon w={15} h={13}>
              <path d="M0.500 0.500H14.500V12.500H0.500Z" fill="#dfe4ee" stroke="#9aa5b8" />
              <path d="M3 3.500L6 6.500L3 9.500M8 9.500H12" stroke="#333" strokeWidth="1.300" />
            </Icon>
            <Icon w={6} h={4}><path d="M0 0H6L3 4Z" fill="#777" /></Icon>
          </button>
          <input aria-label="Команда" placeholder="Введите команду" className="ml-[6px] h-5 flex-1 italic outline-none placeholder:text-[#8f8f8f]" />
        </div>
      </div>
    </section>
  );
}

function LayoutTabs() {
  return (
    <div className="flex h-[21px] items-start bg-[#363636] pl-[9px] text-[12px] leading-[18px]">
      <button className="h-[19px] w-[74px] bg-linear-to-b from-[#6c6c6c] to-[#8a8a8a] font-bold text-white [clip-path:path('M0_0H74C68_4_70_19_60_19H16C6_19_6_4_0_0Z')]">Модель</button>
      <button className="h-[19px] w-[50px] bg-[#545454] text-[#b5b5b5] [clip-path:path('M0_0H50C44_4_46_19_36_19H14C6_19_6_4_0_0Z')]">Work</button>
      <button aria-label="Добавить лист" className="mt-px ml-[2px] flex h-4 w-[23px] items-center justify-center rounded-tl-xl rounded-tr-sm rounded-br-xl rounded-bl-sm bg-[#545454]">
        <Icon w={8} h={8}><path d="M4 0V8M0 4H8" stroke="#b8b8b8" strokeWidth="2" /></Icon>
      </button>
    </div>
  );
}

/* ----------------------------------------------------------- status bar */

function Group({ cls, children }: { cls: string } & Kids) {
  return <div className={`flex h-[27px] shrink-0 items-center border border-[#808080] bg-[#4d4d4d] ${cls}`}>{children}</div>;
}

function Cell({ label, cls, children }: { label: string; cls: string } & Kids) {
  return <button aria-label={label} className={`flex h-full shrink-0 items-center justify-center ${cls}`}>{children}</button>;
}

const manPath = 'M8 1C9 1 10 2 10 4L10 8C12 10 14 11 15 15L9 12.500L8 14L7 12.500L1 15C2 11 4 10 6 8V4C6 2 7 1 8 1Z';

function StatusBar() {
  return (
    <footer className="flex h-[29px] items-start justify-end gap-px border-b-2 border-[#707070] bg-[#363636] pr-px text-[12px] text-white">
      <Group cls="w-[58px] justify-center"><button>МОДЕЛЬ</button></Group>
      <Group cls="w-[65px]">
        <Cell label="Сетка" cls="w-6">
          <Icon w={15} h={15}><path d="M2.500 0V15M5.500 0V15M9.500 0V15M12.500 0V15" stroke="#bdbdbd" /><path d="M0 2.500H15M0 5.500H15M0 9.500H15M0 12.500H15" stroke="#bdbdbd" strokeDasharray="1 1" /></Icon>
        </Cell>
        <Cell label="Привязка" cls="w-[23px]">
          <Icon w={14} h={14}><path d="M0 1.500H14M0 4.500H14M0 7.500H14M0 10.500H14M0 13.500H14" stroke="#d2d2d2" strokeDasharray="1 2" /></Icon>
        </Cell>
        <Cell label="Шаг" cls="w-4"><Caret /></Cell>
      </Group>
      <Group cls="w-[193px]">
        <Cell label="Орто" cls="w-[25px]"><Icon w={13} h={14}><path d="M1 1V12.500H13M1 7.500H6.500V12" stroke="#c9c9c9" strokeWidth="1.300" /></Icon></Cell>
        <Cell label="Полярное отслеживание" cls="w-[23px]">
          <Icon w={17} h={16}><path d="M10.500 2.500A6 6 0 1 0 13.500 9M7.500 8.500H16M7.500 8.500L13 3M10 7.500L14 6" stroke="#2d95ff" strokeWidth="1.700" /></Icon>
        </Cell>
        <Cell label="Углы" cls="w-4"><Caret /></Cell>
        <Cell label="Изометрия" cls="w-6"><Icon w={18} h={18}><path d="M1 1L9 9V0M9 9V18M9 9L17 17" stroke="#b5b5b5" strokeWidth="1.300" /></Icon></Cell>
        <Cell label="Плоскости" cls="w-[15px] border-r border-[#808080]"><Caret /></Cell>
        <Cell label="Объектное отслеживание" cls="w-[25px]"><Icon w={17} h={14}><path d="M16 12.500H2L13 1" stroke="#2d95ff" strokeWidth="1.700" /><path d="M6 5L10 9" stroke="#2d95ff" strokeWidth="2" /></Icon></Cell>
        <Cell label="Объектная привязка" cls="w-6"><Icon w={17} h={16}><path d="M3 3H15V14.500H3Z" stroke="#2d95ff" strokeWidth="1.500" /><path d="M1 1H5.500V5.500H1Z" fill="#0ddb1f" stroke="#111" /></Icon></Cell>
        <Cell label="Режимы привязки" cls="w-[15px] border-r border-[#808080]"><Caret /></Cell>
        <Cell label="Вес линий" cls="flex-1"><Icon w={16} h={14}><path d="M0 0.500H16" stroke="#c9c9c9" /><path d="M0 4.500H10M0 8.500H16" stroke="#c9c9c9" strokeWidth="2" /><path d="M0 12.500H11" stroke="#c9c9c9" strokeWidth="3" /><path d="M9 4.500H16" stroke="#c9c9c9" /></Icon></Cell>
      </Group>
      <Group cls="w-[159px]">
        <Cell label="Видимость аннотаций" cls="w-6"><Icon w={17} h={16}><path d={manPath} fill="#c4c4c4" /><circle cx="12.500" cy="4" r="2.500" fill="#4d4d4d" stroke="#c4c4c4" /></Icon></Cell>
        <Cell label="Автомасштаб" cls="w-6"><Icon w={17} h={16}><path d={manPath} fill="#2d95ff" /><path d="M14 1L10.500 5H15L11 9" stroke="#2d95ff" strokeWidth="1.500" /></Icon></Cell>
        <Cell label="Масштаб аннотаций" cls="w-6"><Icon w={17} h={16}><path d={manPath} fill="#c4c4c4" /></Icon></Cell>
        <button className="flex flex-1 items-center justify-between pr-1 pl-[5px] whitespace-nowrap">1/8" = 1'-0"<Caret /></button>
      </Group>
      <Group cls="w-[66px]">
        <Cell label="Параметры" cls="w-6"><Icon w={15} h={15}><circle cx="7.500" cy="7.500" r="3.500" stroke="#c9c9c9" strokeWidth="3" /><path d="M7.500 1V3M7.500 12V14M1 7.500H3M12 7.500H14M3 3L4.500 4.500M12 3L10.500 4.500M3 12L4.500 10.500M12 12L10.500 10.500" stroke="#c9c9c9" strokeWidth="2" /></Icon></Cell>
        <Cell label="Список параметров" cls="w-4 border-r border-[#808080]"><Caret /></Cell>
        <Cell label="Монитор аннотаций" cls="flex-1"><Icon w={14} h={14}><path d="M7 0V14M0 7H14" stroke="#c9c9c9" strokeWidth="2" /></Icon></Cell>
      </Group>
      <Group cls="w-[185px]">
        <button className="flex h-full w-[95px] items-center justify-between border-r border-[#808080] pr-[3px] whitespace-nowrap">Medium Detail<Caret /></button>
        <Cell label="Секущая плоскость" cls="w-6">
          <Icon w={17} h={18}>
            <path d="M2 5L8.500 1L15 5" stroke="#c9c9c9" strokeDasharray="1.500 1.500" />
            <path d="M2 11L8.500 14.500L15 11V14L8.500 17.500L2 14Z" fill="#c9c9c9" />
            <path d="M1 8.500L8.500 5L16 8.500L8.500 12Z" fill="#7fb661" />
          </Icon>
        </Cell>
        <button className="flex-1 text-center">42.00000</button>
      </Group>
      <Group cls="w-[85px]">
        <Cell label="Отметка" cls="w-6">
          <Icon w={17} h={17}>
            <path d="M5 5L10 2L16 4V10L11 13L5 11ZM5 5L11 7L16 4M11 7V13" stroke="#d0d0d0" />
            <path d="M1 1H4L1 4.500H4M2.500 5V11" stroke="#111" />
            <path d="M0.500 11.500H5V16H0.500Z" fill="#0ddb1f" stroke="#111" />
          </Icon>
        </Cell>
        <button className="flex-1 text-center">+0.00000</button>
      </Group>
      <Group cls="w-[26px]">
        <Cell label="Изоляция объектов" cls="flex-1"><Icon w={16} h={16}><path d="M1 1H7V7H1ZM3.500 15L7 9.500L10.500 15Z" stroke="#c9c9c9" strokeWidth="1.300" /><circle cx="12" cy="7" r="3" stroke="#c9c9c9" strokeWidth="1.300" /></Icon></Cell>
      </Group>
      <Group cls="w-[26px]">
        <Cell label="Аппаратное ускорение" cls="flex-1"><Icon w={20} h={20}><circle cx="10" cy="10" r="8" fill="#0a59ad" stroke="#1f86ec" strokeWidth="1.500" /><path d="M10 11.500L14 8.500" stroke="#6fc0ff" strokeWidth="1.500" /></Icon></Cell>
      </Group>
      <Group cls="w-[81px] justify-between px-[3px]">
        <Cell label="Штриховка" cls="">
          <Icon w={14} h={15}><path d="M1 5L5 1H13V11L10 14H1Z" stroke="#777" strokeDasharray="1 1" /><path d="M1 8L4 5M1 11L7 5M1 14L10 5M4 14L10 8M7 14L10 11" stroke="#1d8cff" /></Icon>
        </Cell>
        <Cell label="Замена Z" cls=""><Icon w={17} h={14}><path d="M1 12L5 7H10L6 12ZM5 7L9 2H16L12 7H9M9 2L7 9" stroke="#2c86d8" /></Icon></Cell>
        <Cell label="Опорные чертежи" cls="">
          <Icon w={17} h={16}>
            <path d="M1.500 1.500H8.500L11.500 4V8H1.500Z" fill="#cfe3f8" stroke="#345b88" />
            <path d="M3 4H7M3 6H9" stroke="#345b88" />
            <path d="M1 8H11V13H1Z" fill="#ffd83b" />
            <path d="M7 11L10 14L16 8" stroke="#31c320" strokeWidth="2.500" />
          </Icon>
        </Cell>
        <Cell label="Буфер" cls=""><Icon w={15} h={16}><path d="M2 3H11V15H2ZM5 1H9V3" fill="#eee" stroke="#bbb" /><path d="M3 4H8V14H3Z" fill="#666" /><path d="M10 6L15 15H6Z" fill="#f2712c" /><path d="M10.500 9V14" stroke="#fff" /></Icon></Cell>
      </Group>
      <Group cls="w-[50px] justify-between px-1">
        <Cell label="Полный экран" cls=""><Icon w={16} h={13}><path d="M0.500 0.500H15.500V12.500H0.500Z" stroke="#d0d0d0" /><path d="M13 3H9L13 7ZM3 10H7L3 6ZM12 4L9 6M4 9L7 7" fill="#d0d0d0" stroke="#d0d0d0" strokeWidth="0.500" /></Icon></Cell>
        <Cell label="Адаптация" cls=""><Icon w={16} h={14}><path d="M0 2H16M0 7H16M0 12H16" stroke="#c4c4c4" strokeWidth="2" /></Icon></Cell>
      </Group>
    </footer>
  );
}

export default function App() {
  return (
    <div className="flex min-h-screen flex-col rounded-lg border border-t-2 border-[#20242c] bg-[linear-gradient(#dce9f7_0,#b9d1ea_90px,#eaf2fa_215px,#a5c4e4_225px,#b5cfea_100%)] font-['Open_Sans','Noto_Sans',sans-serif]">
      <div className="-mt-[2px] flex flex-1 flex-col px-[7px] pb-[6px]">
        <Header />
        <Ribbon />
        <FileTabs />
        <main className="relative min-h-[504px] flex-1 overflow-hidden bg-white">
          <FloorPlan />
          <ViewControls />
          <Palette />
        </main>
        <CommandLine />
        <LayoutTabs />
        <StatusBar />
      </div>
    </div>
  );
}
